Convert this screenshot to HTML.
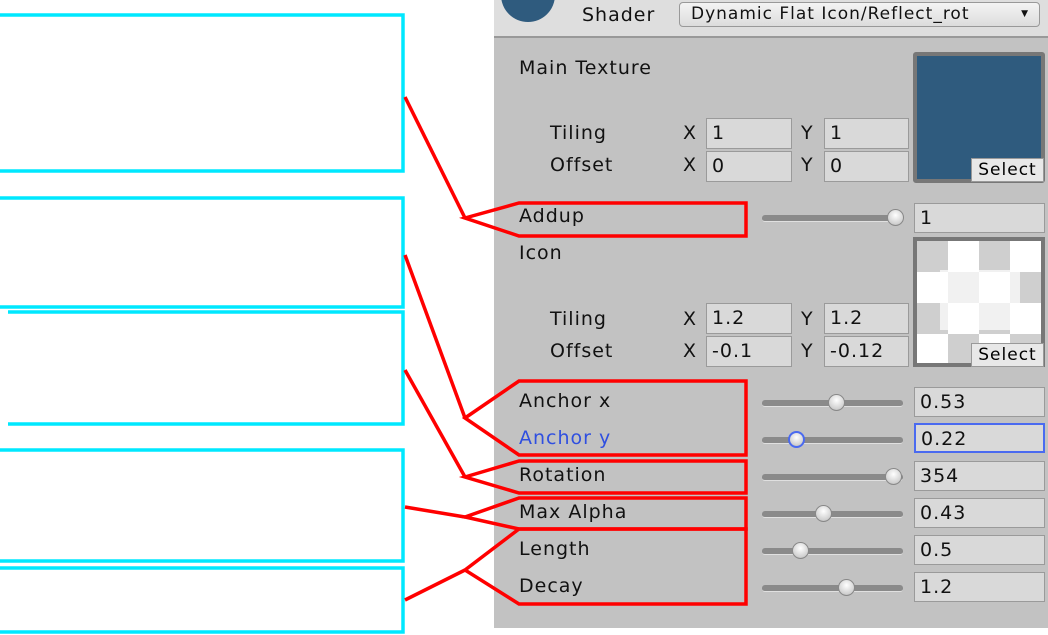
<!DOCTYPE html><html><head><style>
body{margin:0;width:1048px;height:635px;background:#fff;position:relative;overflow:hidden;font-family:"DejaVu Sans","Liberation Sans",sans-serif;}
.a{position:absolute;}
.t{position:absolute;font-size:19px;color:#111;line-height:22px;white-space:nowrap;letter-spacing:1px;}
.f{position:absolute;background:#d9d9d9;border:1px solid #9a9a9a;box-sizing:border-box;font-size:19px;line-height:29px;padding-left:5px;color:#111;letter-spacing:1px;}
.tr{position:absolute;left:762px;width:141px;height:6px;border-radius:3px;background:#8a8a8a;border-bottom:1px solid #e0e0e0;}
.th{position:absolute;width:17px;height:17px;border-radius:50%;background:radial-gradient(circle at 50% 35%,#fff,#d0d0d0 70%,#a8a8a8);border:1px solid #888;box-sizing:border-box;}
</style></head><body>
<div class="a" style="left:494px;top:0;width:554px;height:628px;background:#c2c2c2"></div>
<div class="a" style="left:494px;top:0;width:554px;height:36px;background:#dedede;border-bottom:2px solid #999"></div>
<div class="a" style="left:501px;top:-32px;width:54px;height:54px;border-radius:50%;background:#2f5b7e"></div>
<div class="t" style="left:582px;top:4px">Shader</div>
<div class="a" style="left:679px;top:2px;width:361px;height:25px;border:1px solid #999;border-radius:4px;background:linear-gradient(#f4f4f4,#dcdcdc);box-sizing:border-box;font-size:17px;line-height:23px;padding-left:11px;color:#111;white-space:nowrap;letter-spacing:1px">Dynamic Flat Icon/Reflect_rot<span style="position:absolute;right:10px;font-size:9px">▼</span></div>

<div class="t" style="left:519px;top:57px">Main Texture</div>
<div class="t" style="left:550px;top:122px">Tiling</div><div class="t" style="left:550px;top:154px">Offset</div>
<div class="t" style="left:683px;top:122px">X</div><div class="t" style="left:801px;top:122px">Y</div>
<div class="t" style="left:683px;top:154px">X</div><div class="t" style="left:801px;top:154px">Y</div>
<div class="f" style="left:706px;top:118px;width:86px;height:31px">1</div>
<div class="f" style="left:824px;top:118px;width:85px;height:31px">1</div>
<div class="f" style="left:706px;top:151px;width:86px;height:31px">0</div>
<div class="f" style="left:824px;top:151px;width:85px;height:31px">0</div>
<div class="a" style="left:913px;top:52px;width:132px;height:131px;background:#2f5b7e;border:4px solid #777;box-sizing:border-box;border-radius:3px"></div>
<div class="a" style="left:971px;top:158px;width:73px;height:24px;background:#e8e8e8;border:1px solid #999;box-sizing:border-box;font-size:17px;line-height:22px;text-align:center;letter-spacing:1px">Select</div>

<div class="t" style="left:519px;top:205px">Addup</div>
<div class="tr" style="top:215px"></div><div class="th" style="left:887px;top:209px"></div>
<div class="f" style="left:914px;top:203px;width:131px;height:30px">1</div>

<div class="t" style="left:519px;top:242px">Icon</div>
<div class="a" style="left:913px;top:237px;width:132px;height:130px;border:4px solid #777;box-sizing:border-box;background:#fff"></div>
<div class="a" style="left:917px;top:241px;width:124px;height:122px;background:conic-gradient(#fff 0 90deg,#cfcfcf 90deg 180deg,#fff 180deg 270deg,#cfcfcf 270deg) 0 0/62px 62px"></div>
<div class="a" style="left:940px;top:270px;width:80px;height:60px;background:#fff;opacity:.7"></div>
<div class="a" style="left:971px;top:343px;width:73px;height:24px;background:#e8e8e8;border:1px solid #999;box-sizing:border-box;font-size:17px;line-height:22px;text-align:center;letter-spacing:1px">Select</div>
<div class="t" style="left:550px;top:308px">Tiling</div><div class="t" style="left:550px;top:340px">Offset</div>
<div class="t" style="left:683px;top:308px">X</div><div class="t" style="left:801px;top:308px">Y</div>
<div class="t" style="left:683px;top:340px">X</div><div class="t" style="left:801px;top:340px">Y</div>
<div class="f" style="left:706px;top:303px;width:86px;height:31px">1.2</div>
<div class="f" style="left:824px;top:303px;width:85px;height:31px">1.2</div>
<div class="f" style="left:706px;top:336px;width:86px;height:31px">-0.1</div>
<div class="f" style="left:824px;top:336px;width:85px;height:31px">-0.12</div>

<div class="t" style="left:519px;top:390px">Anchor x</div>
<div class="tr" style="top:400px"></div><div class="th" style="left:828px;top:394px"></div>
<div class="f" style="left:914px;top:387px;width:131px;height:30px">0.53</div>
<div class="t" style="left:519px;top:427px;color:#2f4fe0">Anchor y</div>
<div class="tr" style="top:437px"></div><div class="th" style="left:788px;top:431px;border:2px solid #4a6af0"></div>
<div class="f" style="left:914px;top:423px;width:131px;height:30px;border:2px solid #4a6af0">0.22</div>
<div class="t" style="left:519px;top:464px">Rotation</div>
<div class="tr" style="top:474px"></div><div class="th" style="left:885px;top:468px"></div>
<div class="f" style="left:914px;top:461px;width:131px;height:30px">354</div>
<div class="t" style="left:519px;top:501px">Max Alpha</div>
<div class="tr" style="top:511px"></div><div class="th" style="left:815px;top:505px"></div>
<div class="f" style="left:914px;top:498px;width:131px;height:30px">0.43</div>
<div class="t" style="left:519px;top:538px">Length</div>
<div class="tr" style="top:548px"></div><div class="th" style="left:792px;top:542px"></div>
<div class="f" style="left:914px;top:535px;width:131px;height:30px">0.5</div>
<div class="t" style="left:519px;top:575px">Decay</div>
<div class="tr" style="top:585px"></div><div class="th" style="left:838px;top:579px"></div>
<div class="f" style="left:914px;top:572px;width:131px;height:30px">1.2</div>

<svg class="a" style="left:0;top:0" width="1048" height="635">
<g fill="none" stroke="#00e8ff" stroke-width="3.5">
<polyline points="0,15 403,15 403,171 0,171"/>
<polyline points="0,198 403,198 403,307 0,307"/>
<polyline points="8,312 403,312 403,424 8,424"/>
<polyline points="0,450 403,450 403,561 0,561"/>
<polyline points="0,568 403,568 403,632 0,632"/>
</g>
<g fill="none" stroke="#ff0000" stroke-width="3.5" stroke-linejoin="miter">
<polyline points="405,97 465,218"/>
<polygon points="465,218 519,203 746,203 746,236 519,236"/>
<polyline points="405,255 465,418"/>
<polygon points="465,418 519,381 746,381 746,455 519,455"/>
<polyline points="405,370 465,477"/>
<polygon points="465,477 519,461 746,461 746,493 519,493"/>
<polyline points="405,507 465,517"/>
<polygon points="465,517 519,498 746,498 746,529 519,529"/>
<polyline points="405,600 465,570"/>
<polygon points="465,570 519,529 746,529 746,604 519,604"/>
</g>
</svg>
</body></html>
